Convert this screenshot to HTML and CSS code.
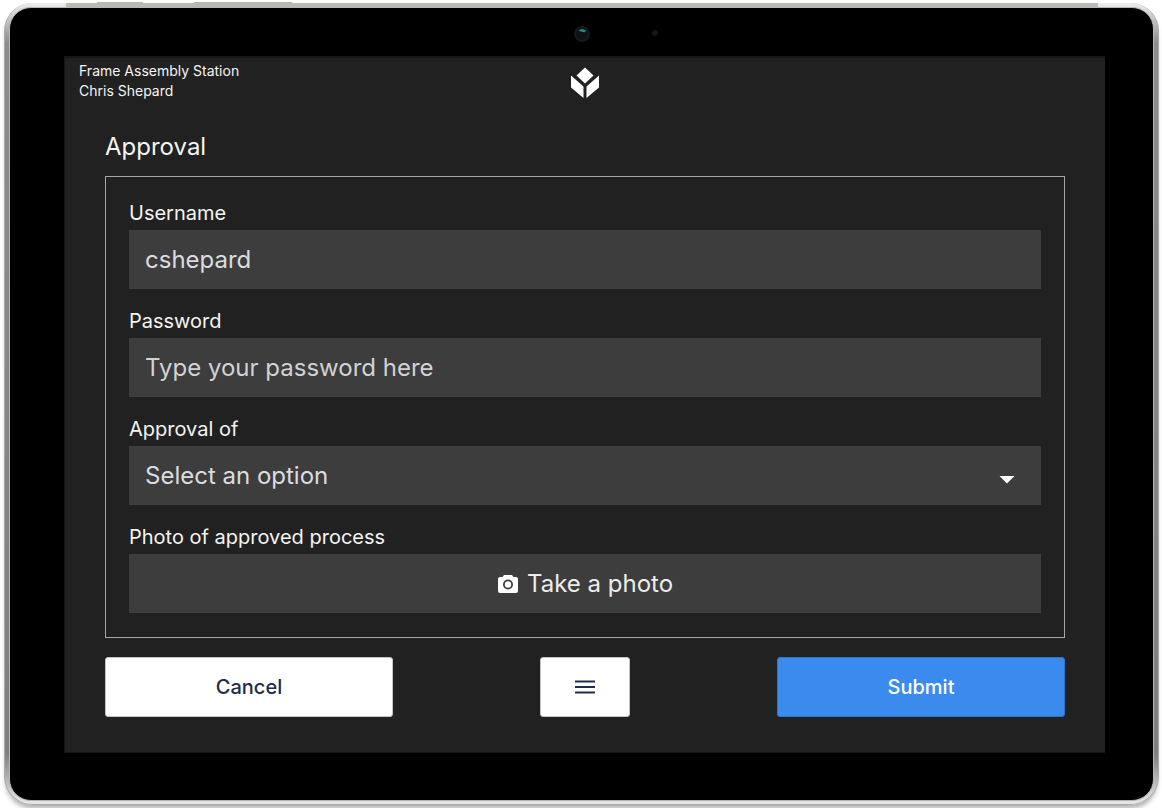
FILE: index.html
```html
<!DOCTYPE html>
<html lang="en">
<head>
    <meta charset="UTF-8">
    <meta name="viewport" content="width=device-width, initial-scale=1.0">
    <title>Approval</title>
    <link rel="stylesheet" href="styles.css">
</head>
<body>
    <div class="tablet">
        <span class="key power"></span>
        <span class="key volume"></span>
        <span class="band"></span>
        <div class="bezel">
            <svg class="camera" width="90" height="18" viewBox="0 0 90 18" aria-hidden="true">
                <circle cx="9" cy="9" r="8" fill="#15191d"/>
                <circle cx="9" cy="9" r="6" fill="#0a1418"/>
                <path d="M5.5 5.5Q9 2.5 13 5.5Q13 8 10 7Q7 6.2 5.5 5.5Z" fill="#2b8583"/>
                <circle cx="82" cy="8" r="3" fill="#151515"/>
            </svg>
            <div class="screen">
                <header>
                    <div class="station">
                        <div>Frame Assembly Station</div>
                        <div>Chris Shepard</div>
                    </div>
                    <svg class="logo" width="30" height="32" viewBox="0 0 30 32" aria-hidden="true">
                        <path fill="#fff" d="M15 0.5L23.5 8.5L15 16.5L6.5 8.5ZM1 8.5L13.5 19.5V31L1 20.5ZM29 8.5L16.5 19.5V31L29 20.5Z"/>
                    </svg>
                </header>
                <main>
                    <h1>Approval</h1>
                    <form onsubmit="return false">
                        <div class="panel">
                            <div class="field">
                                <label for="username">Username</label>
                                <input type="text" id="username" value="cshepard">
                            </div>
                            <div class="field">
                                <label for="password">Password</label>
                                <input type="password" id="password" placeholder="Type your password here">
                            </div>
                            <div class="field">
                                <label for="approvalOf">Approval of</label>
                                <div class="select">
                                    <select id="approvalOf">
                                        <option value="">Select an option</option>
                                    </select>
                                    <svg class="arrow" width="16" height="8" viewBox="0 0 16 8" aria-hidden="true"><path d="M0.5 0H15.5L8 7.5Z" fill="#fff"/></svg>
                                </div>
                            </div>
                            <div class="field">
                                <label for="photo">Photo of approved process</label>
                                <button type="button" id="photo">
                                    <svg width="22" height="20" viewBox="0 0 22 20" aria-hidden="true">
                                        <path fill="#fff" fill-rule="evenodd" d="M7 1H15L16.5 3H19Q21 3 21 5V17Q21 19 19 19H3Q1 19 1 17V5Q1 3 3 3H5.5ZM11 5.5A5 5 0 1 0 11 15.5A5 5 0 1 0 11 5.5Z"/>
                                        <circle cx="11" cy="10.5" r="3.2" fill="#fff"/>
                                    </svg>
                                    Take a photo
                                </button>
                            </div>
                        </div>
                        <div class="actions">
                            <button type="button" class="btn">Cancel</button>
                            <button type="button" class="btn menu" aria-label="Menu">
                                <svg width="22" height="16" viewBox="0 0 22 16" aria-hidden="true"><path d="M1 2.5H21M1 8H21M1 13.5H21" stroke="#212b4a" stroke-width="2"/></svg>
                            </button>
                            <button type="submit" class="btn submit">Submit</button>
                        </div>
                    </form>
                </main>
            </div>
        </div>
    </div>
</body>
</html>
```
FILE: styles.css
```css
* {
    box-sizing: border-box;
}

body {
    min-height: 100vh;
    margin: 0;
    padding: 3px 3px 4px 4px;
    background-color: #fff;
    font-family: Inter, "Liberation Sans", sans-serif;
    color: #f4f4f4;
}

/* device */
.tablet {
    position: relative;
    padding: 4px 4px 3px;
    border: 1px solid #aaa;
    border-top-width: 0;
    border-radius: 28px;
    background: linear-gradient(to bottom, #ededed, #8c8c8c 40px, #808080 calc(100% - 50px), #e8e8e8);
    box-shadow: 0 5px 5px -2px #aaa;
}

.bezel {
    position: relative;
    padding: 48px 48px 47px 54px;
    border: 1px solid #b5b5b5;
    border-radius: 22px;
    background-color: #000;
}

.band {
    position: absolute;
    top: 0;
    left: 61px;
    right: 60px;
    height: 4px;
    background-color: #b8b9b2;
}

.key {
    position: absolute;
    top: -1px;
    height: 1px;
    background-color: #b5b5b1;
}

.power {
    left: 92px;
    width: 46px;
}

.volume {
    left: 189px;
    width: 98px;
}

.camera {
    position: absolute;
    top: 17px;
    left: 50%;
    margin-left: -9px;
}

.screen {
    padding: 3px 40px 35px;
    border: 1px solid #161616;
    border-top-width: 2px;
    border-right: 0;
    background-color: #212121;
}

/* app */
header {
    display: grid;
    grid-template-columns: 1fr auto 1fr;
    margin: 0 -26px;
}

.station {
    font-size: 14px;
    line-height: 20px;
}

.logo {
    margin-top: 6px;
}

h1 {
    margin: 30px 0 13px;
    font-size: 24px;
    font-weight: 400;
    line-height: 32px;
}

.panel {
    display: grid;
    gap: 20px;
    padding: 24px 23px;
    border: 1px solid #a6a6a6;
}

.field label {
    display: block;
    margin-bottom: 5px;
    font-size: 20px;
    line-height: 24px;
}

.field input,
.field select,
.field button {
    display: block;
    width: 100%;
    height: 59px;
    padding: 0 16px;
    border: 0;
    border-radius: 0;
    background-color: #3d3d3d;
    color: #dcdce0;
    font-family: inherit;
    font-size: 24px;
}

.field input::placeholder {
    color: #d2d2d6;
    opacity: 1;
}

.field select {
    appearance: none;
}

.select {
    position: relative;
}

.arrow {
    position: absolute;
    top: 30px;
    right: 26px;
    pointer-events: none;
}

.field button {
    display: flex;
    align-items: center;
    justify-content: center;
    gap: 8px;
    color: #ececec;
}

.actions {
    display: flex;
    justify-content: space-between;
    margin-top: 19px;
}

.btn {
    width: 30%;
    height: 60px;
    border: 1px solid #c4c4c4;
    border-radius: 3px;
    background-color: #fff;
    color: #212b4a;
    font-family: inherit;
    font-size: 20px;
    font-weight: 500;
}

.menu {
    display: flex;
    align-items: center;
    justify-content: center;
    width: 90px;
}

.submit {
    border-color: #3475c8;
    background-color: #3b8aed;
    color: #fff;
}
```
